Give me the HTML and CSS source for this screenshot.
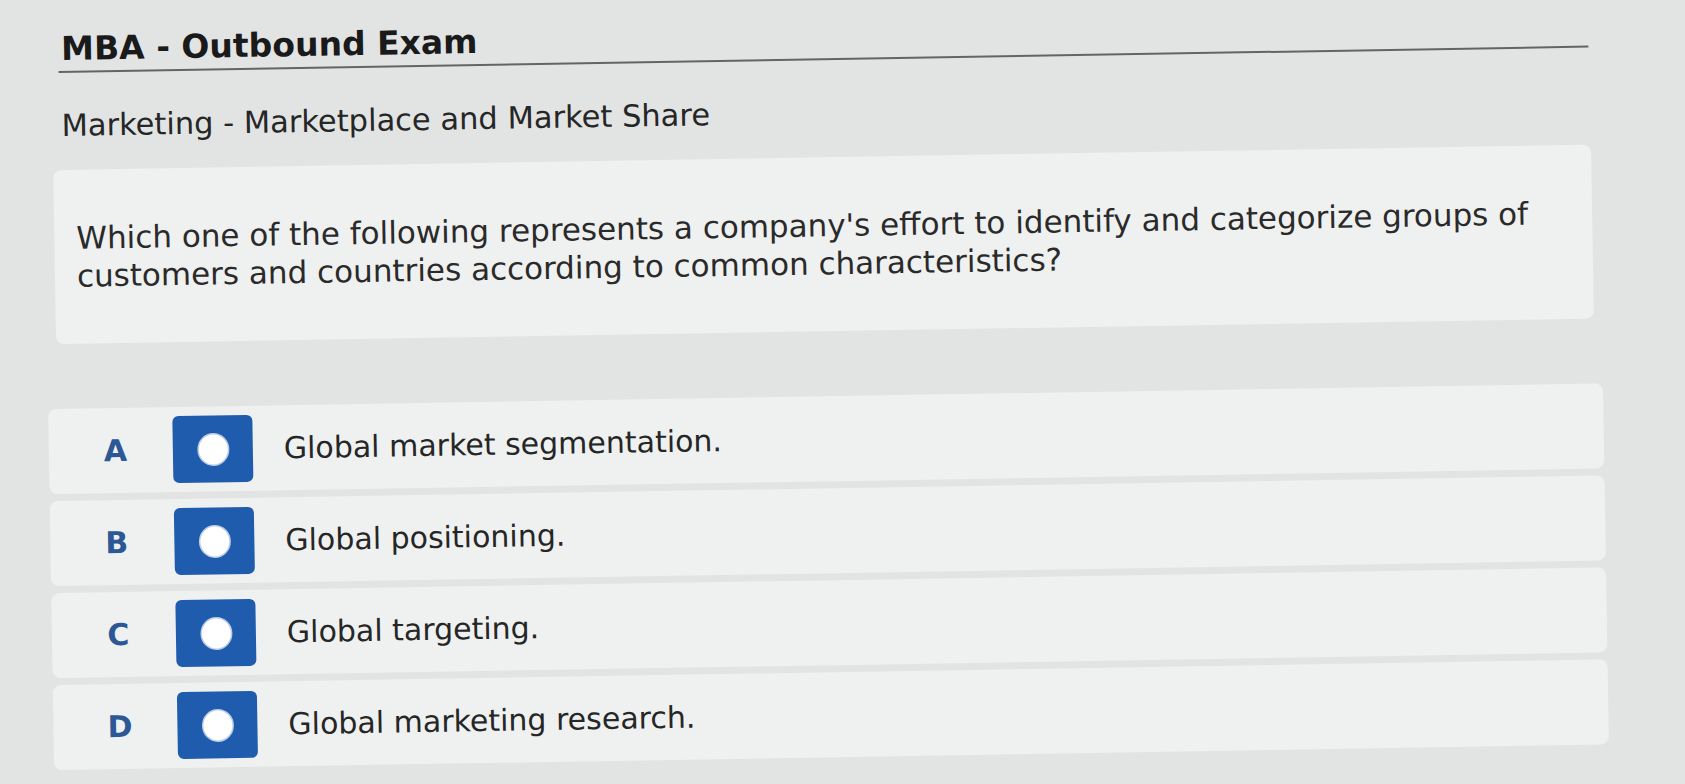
FILE: index.html
```html
<!DOCTYPE html>
<html lang="en">
<head>
<meta charset="utf-8">
<title>MBA - Outbound Exam</title>
<link rel="stylesheet" href="styles.css">
</head>
<body>
<main class="page">
  <header class="exam-header">
    <h1 class="exam-title">MBA - Outbound Exam</h1>
  </header>
  <h2 class="topic">Marketing - Marketplace and Market Share</h2>
  <section class="question">
    <p class="question-text">Which one of the following represents a company's effort to identify and categorize groups of customers and countries according to common characteristics?</p>
  </section>
  <ol class="options">
    <li class="option">
      <span class="option-letter">A</span>
      <span class="radio"><span class="radio-dot"></span></span>
      <span class="option-text">Global market segmentation.</span>
    </li>
    <li class="option">
      <span class="option-letter">B</span>
      <span class="radio"><span class="radio-dot"></span></span>
      <span class="option-text">Global positioning.</span>
    </li>
    <li class="option">
      <span class="option-letter">C</span>
      <span class="radio"><span class="radio-dot"></span></span>
      <span class="option-text">Global targeting.</span>
    </li>
    <li class="option">
      <span class="option-letter">D</span>
      <span class="radio"><span class="radio-dot"></span></span>
      <span class="option-text">Global marketing research.</span>
    </li>
  </ol>
</main>
</body>
</html>
```
FILE: styles.css
```css
html, body {
  margin: 0;
  padding: 0;
}

body {
  background: #e2e4e4;
  font-family: "DejaVu Sans", Verdana, sans-serif;
  color: #262626;
  height: 784px;
  overflow: hidden;
}

.page {
  width: 1685px;
  height: 784px;
  box-sizing: border-box;
  padding-top: 30px;
  transform: rotate(-0.95deg);
  transform-origin: 0 400px;
}

.exam-header {
  margin: 0 0 0 64px;
  width: 1530px;
  box-sizing: border-box;
  padding: 0 0 2px 3px;
  border-bottom: 2px solid #616567;
}

.exam-title {
  margin: 0;
  font-size: 33px;
  line-height: 40px;
  font-weight: bold;
  color: #1a1a1a;
}

.topic {
  margin: 35px 0 0 66px;
  font-size: 30.5px;
  line-height: 36px;
  font-weight: normal;
  color: #262626;
}

.question {
  margin: 26px 0 0 57px;
  width: 1538px;
  box-sizing: border-box;
  padding: 49px 34px 49px 22px;
  background: #eff0f0;
  border-radius: 8px;
}

.question-text {
  margin: 0;
  font-size: 31px;
  line-height: 38px;
  color: #2a2a2a;
}

.options {
  list-style: none;
  margin: 65px 0 0 48px;
  padding: 0;
  width: 1555px;
  display: flex;
  flex-direction: column;
  gap: 7px;
}

.option {
  height: 85px;
  box-sizing: border-box;
  display: flex;
  align-items: center;
  padding-left: 43px;
  background: #eff1f1;
  border-radius: 8px;
}

.option-letter {
  width: 47px;
  text-align: center;
  font-size: 30px;
  font-weight: bold;
  color: #2c5896;
}

.radio {
  margin-left: 34px;
  width: 80px;
  height: 67px;
  border-radius: 6px;
  background: #1f5cae;
  display: flex;
  align-items: center;
  justify-content: center;
}

.radio-dot {
  width: 29px;
  height: 30px;
  border-radius: 50%;
  background: #ffffff;
  box-shadow: 0 0 0 1.5px #b9cbe6;
}

.option-text {
  margin-left: 31px;
  font-size: 30px;
  color: #262626;
}
```
